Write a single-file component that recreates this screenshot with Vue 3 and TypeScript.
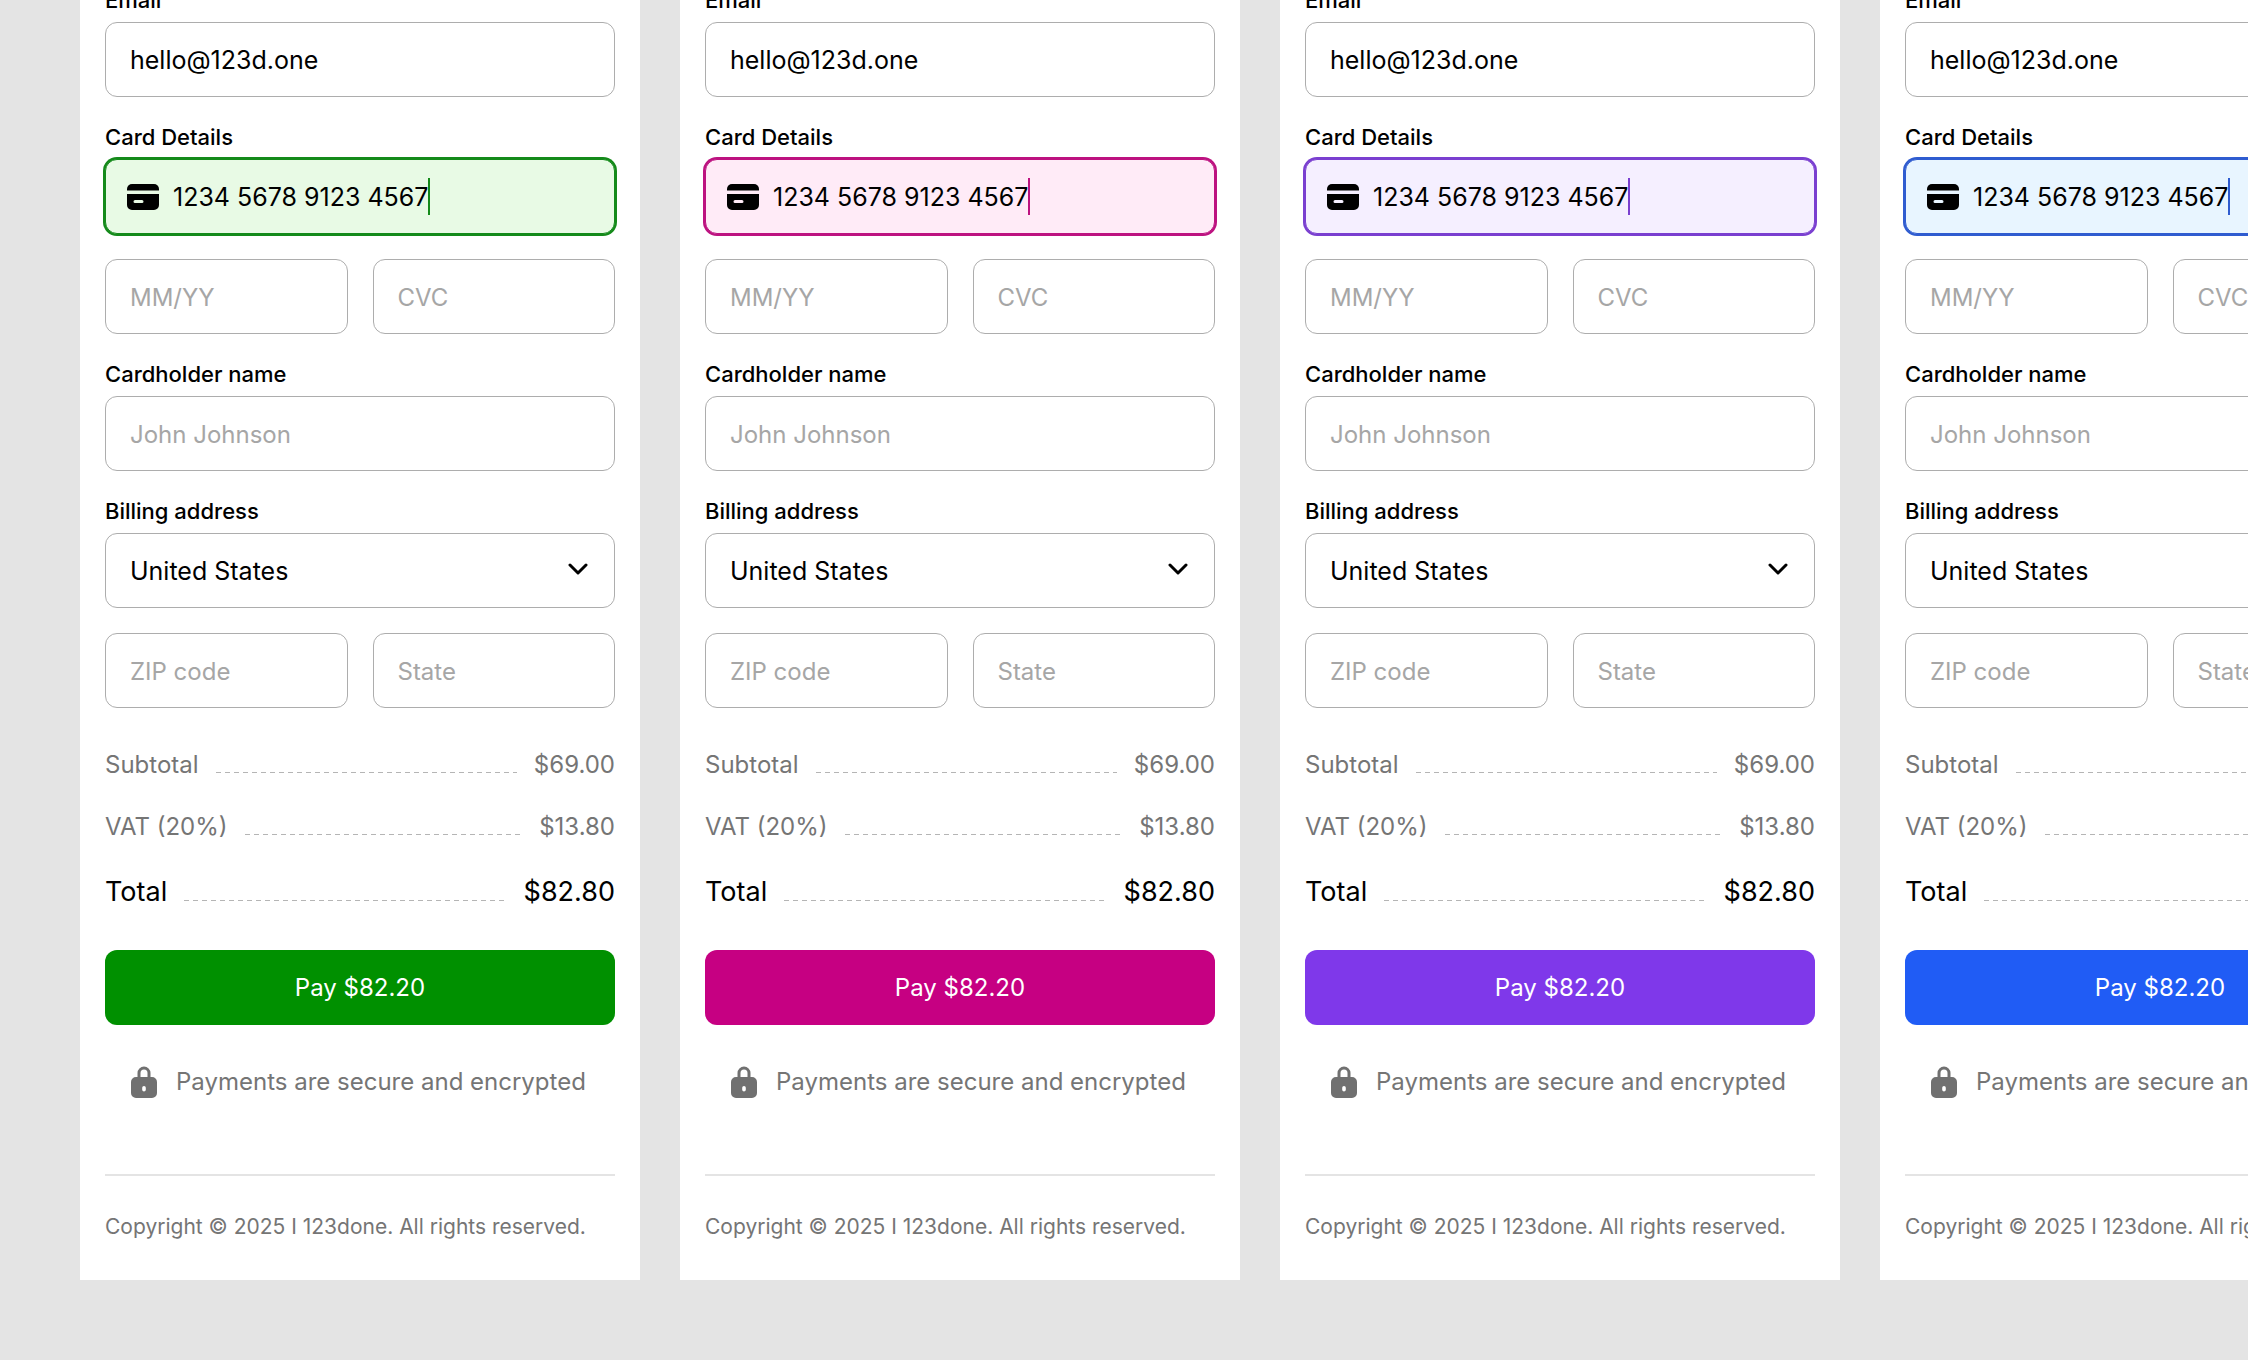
<script setup lang="ts">
interface Theme {
  id: string
  accent: string
  ring: string
  tint: string
}

interface CostRow {
  label: string
  amount: string
  total?: boolean
}

const themes: Theme[] = [
  { id: 'green', accent: '#009000', ring: '#148a1a', tint: '#e8fae5' },
  { id: 'pink', accent: '#c60082', ring: '#bd1280', tint: '#ffebf7' },
  { id: 'violet', accent: '#7f38ea', ring: '#7a3fd0', tint: '#f5efff' },
  { id: 'blue', accent: '#205cf5', ring: '#2f5cd0', tint: '#e8f5ff' },
]

const costs: CostRow[] = [
  { label: 'Subtotal', amount: '$69.00' },
  { label: 'VAT (20%)', amount: '$13.80' },
  { label: 'Total', amount: '$82.80', total: true },
]
</script>

<template>
  <main class="board">
    <form
      v-for="t in themes"
      :key="t.id"
      class="checkout"
      :style="{ '--accent': t.accent, '--ring': t.ring, '--tint': t.tint }"
      @submit.prevent
    >
      <label class="label" :for="`${t.id}-email`">Email</label>
      <input :id="`${t.id}-email`" class="box" type="text" value="hello@123d.one" />

      <label class="label" :for="`${t.id}-card`">Card Details</label>
      <div class="box card-box">
        <svg class="card-icon" viewBox="0 0 32 26" aria-hidden="true">
          <path d="M0 6.500V5a5 5 0 0 1 5-5h22a5 5 0 0 1 5 5v1.500z" />
          <path
            fill-rule="evenodd"
            d="M0 10h32v11a5 5 0 0 1-5 5H5a5 5 0 0 1-5-5zM8 16a1.500 1.500 0 0 0 0 3h7a1.500 1.500 0 0 0 0-3z"
          />
        </svg>
        <input :id="`${t.id}-card`" class="card-number" type="text" value="1234 5678 9123 4567" />
        <span class="caret"></span>
      </div>
      <div class="pair">
        <input class="box" type="text" placeholder="MM/YY" aria-label="Expiry date" />
        <input class="box" type="text" placeholder="CVC" aria-label="Security code" />
      </div>

      <label class="label" :for="`${t.id}-name`">Cardholder name</label>
      <input :id="`${t.id}-name`" class="box" type="text" placeholder="John Johnson" />

      <label class="label" :for="`${t.id}-country`">Billing address</label>
      <div class="select-wrap">
        <select :id="`${t.id}-country`" class="box">
          <option>United States</option>
        </select>
        <svg class="chevron" viewBox="0 0 20 12" aria-hidden="true">
          <path d="M2 2l8 8 8-8" />
        </svg>
      </div>
      <div class="pair">
        <input class="box" type="text" placeholder="ZIP code" aria-label="ZIP code" />
        <input class="box" type="text" placeholder="State" aria-label="State" />
      </div>

      <dl class="costs">
        <div v-for="c in costs" :key="c.label" class="cost" :class="{ total: c.total }">
          <dt>{{ c.label }}</dt>
          <dd class="leader" aria-hidden="true"></dd>
          <dd>{{ c.amount }}</dd>
        </div>
      </dl>

      <button class="pay" type="submit">Pay $82.20</button>

      <p class="secure">
        <svg class="lock" viewBox="0 0 26 32" aria-hidden="true">
          <path class="shackle" d="M8 13V7a5 5 0 0 1 10 0v6" />
          <path
            fill-rule="evenodd"
            d="M5 11h16a5 5 0 0 1 5 5v11a5 5 0 0 1-5 5H5a5 5 0 0 1-5-5V16a5 5 0 0 1 5-5zM13 20a1.800 1.800 0 0 0-1.800 1.800v2a1.800 1.800 0 0 0 3.600 0v-2A1.800 1.800 0 0 0 13 20z"
          />
        </svg>
        Payments are secure and encrypted
      </p>

      <footer class="foot">Copyright © 2025 I 123done. All rights reserved.</footer>
    </form>
  </main>
</template>

<style>
body {
  background: #e4e4e4;
}
</style>

<style scoped>
.board {
  display: flex;
  align-items: flex-start;
  gap: 40px;
  padding: 0 80px 80px;
  overflow: hidden;
  font-family: Inter, 'Liberation Sans', sans-serif;
  color: #000;
}

.checkout {
  box-sizing: border-box;
  flex: 0 0 560px;
  display: flex;
  flex-direction: column;
  margin-top: -40px;
  padding: 0 25px;
  background: #fff;
}

.label {
  padding: 26px 0 8px;
  font-size: 22px;
  line-height: 28px;
  font-weight: 500;
}

.box {
  box-sizing: border-box;
  width: 100%;
  height: 75px;
  padding: 0 24px;
  border: 1px solid #adadad;
  border-radius: 12px;
  background: #fff;
  font: inherit;
  font-size: 25px;
  color: #000;
  outline: none;
}

.box::placeholder {
  font-size: 24px;
  color: #a6a6a6;
  opacity: 1;
}

.card-box {
  display: flex;
  align-items: center;
  padding: 0 21px;
  border-color: var(--ring);
  background: var(--tint);
  box-shadow: 0 0 0 2px var(--ring);
}

.card-icon {
  width: 32px;
  height: 26px;
  margin-right: 14px;
}

.card-number {
  field-sizing: content;
  padding: 0;
  border: 0;
  background: none;
  font: inherit;
  color: inherit;
  outline: none;
}

.caret {
  width: 2px;
  height: 37px;
  background: var(--ring);
}

.pair {
  display: grid;
  grid-template-columns: 1fr 1fr;
  gap: 25px;
  margin-top: 25px;
}

.select-wrap {
  position: relative;
}

.select-wrap .box {
  display: block;
  appearance: none;
}

.chevron {
  position: absolute;
  top: 30px;
  right: 27px;
  width: 20px;
  height: 12px;
  fill: none;
  stroke: #000;
  stroke-width: 3;
  stroke-linecap: round;
  stroke-linejoin: round;
  pointer-events: none;
}

.costs {
  display: flex;
  flex-direction: column;
  gap: 30px;
  margin: 41px 0 0;
}

.cost {
  display: flex;
  align-items: baseline;
  gap: 17px;
  font-size: 24px;
  line-height: 32px;
  color: #757575;
}

.cost dt,
.cost dd {
  margin: 0;
}

.cost .leader {
  flex: 1;
  height: 1px;
  background: repeating-linear-gradient(90deg, #b5b5b5 0 5px, transparent 5px 9px);
}

.cost.total {
  font-size: 27px;
  line-height: 38px;
  color: #000;
}

.pay {
  height: 75px;
  margin-top: 39px;
  border: 0;
  border-radius: 12px;
  background: var(--accent);
  color: #fff;
  font: inherit;
  font-size: 24px;
}

.secure {
  display: flex;
  align-items: center;
  gap: 19px;
  margin: 41px 0 0;
  padding-left: 26px;
  font-size: 24px;
  line-height: 32px;
  color: #757575;
}

.lock {
  width: 26px;
  height: 32px;
  fill: #707070;
}

.lock .shackle {
  fill: none;
  stroke: #707070;
  stroke-width: 3;
}

.foot {
  margin-top: 76px;
  padding: 36px 0 38px;
  border-top: 2px solid #e4e4e4;
  font-size: 21px;
  line-height: 30px;
  color: #757575;
  white-space: nowrap;
}
</style>
